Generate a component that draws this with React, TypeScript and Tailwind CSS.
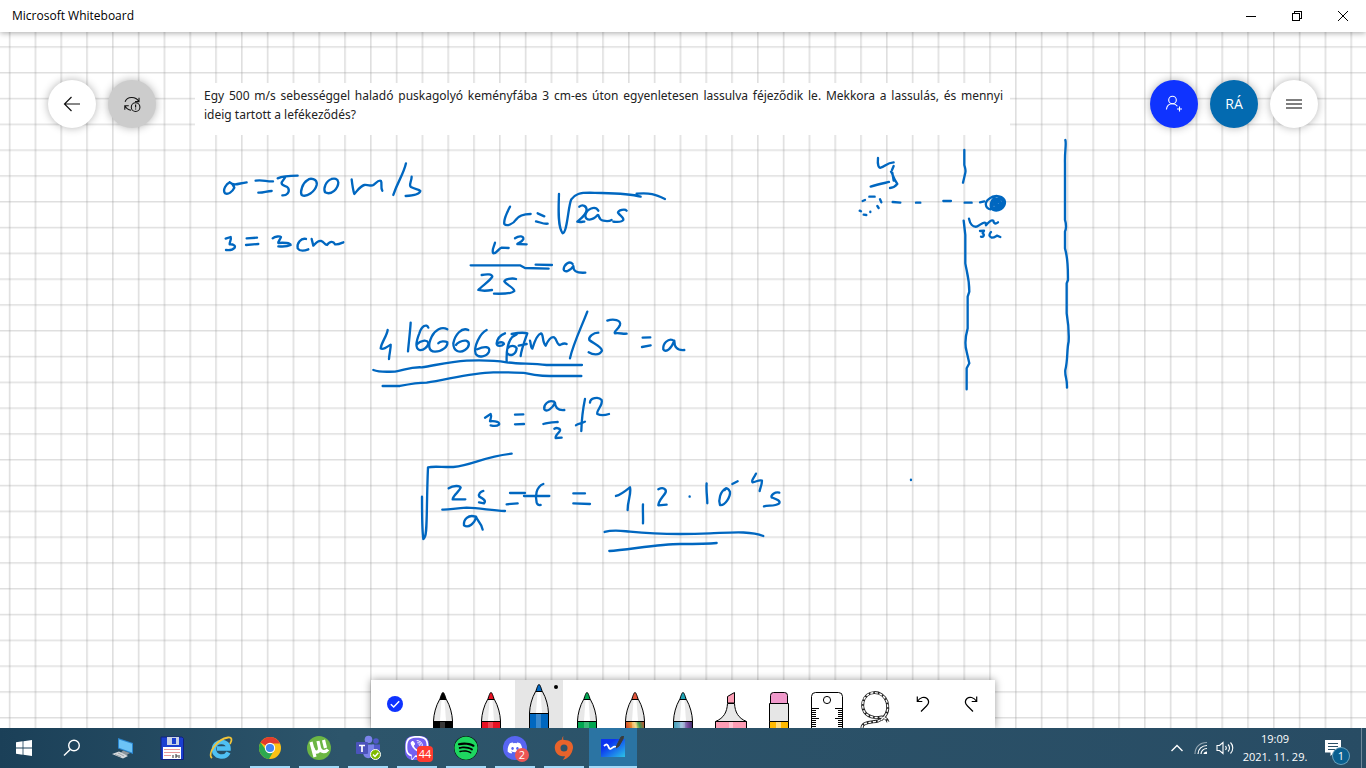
import React, {ReactNode} from 'react'
import {FaDiscord, FaSpotify, FaViber} from 'react-icons/fa'

const INK = '#0067c0'

interface InkGroup {
  id: string
  x: number
  y: number
  strokes: string[]
}

// every group is drawn at three times its size on the board
const inkGroups: InkGroup[] = [
  {
    id: 'given-values',
    x: 195,
    y: 43,
    strokes: [
      'M104 322C94 326 82 345 90 355C100 360 112 350 118 338C116 328 108 324 104 322C120 334 130 325 155 322',
      'M182 317C200 313 215 320 234 319M190 353C205 354 215 348 230 348',
      'M248 310C265 302 285 302 308 302M270 308L260 322C257 335 275 330 280 340C285 352 275 362 262 361',
      'M337 316C322 325 315 350 320 360C335 368 360 350 365 330C368 310 345 308 337 316',
      'M410 312C392 318 385 340 390 352C410 362 430 340 430 322C428 310 418 310 410 312',
      'M470 313C472 330 474 345 478 357C485 350 495 333 508 330C520 328 528 335 535 330C545 322 552 313 558 318C562 325 556 338 562 347',
      'M633 265C625 300 610 315 595 360',
      'M650 305C650 320 640 330 648 336C660 343 672 342 676 348C674 358 650 362 632 363',
      'M92 491L107 486C110 494 103 502 104 508C115 507 122 512 119 518C112 526 100 526 93 525',
      'M155 490L186 488M153 510L190 507',
      'M233 490C240 484 255 483 258 486C256 494 248 500 250 504C265 502 288 504 287 510C275 516 262 515 250 514',
      'M333 492C318 488 305 505 308 520C315 530 330 527 340 523',
      'M350 492L355 512C362 505 368 496 378 498C388 501 388 508 396 510C406 496 416 500 420 508C428 510 438 505 445 502',
    ],
  },
  {
    id: 'acceleration',
    x: 360,
    y: 148,
    strokes: [
      'M450 80C440 100 430 118 433 132C440 140 460 132 467 120C475 108 490 102 512 102',
      'M533 100L553 109M528 124C540 126 550 133 563 131',
      'M597 42C596 80 592 140 608 160C622 158 624 80 634 58C645 42 660 38 690 38C740 40 800 38 842 50M830 41C870 38 885 42 915 57',
      'M658 80C668 72 680 78 680 90C678 106 660 118 652 125C662 128 670 124 673 125',
      'M715 92C706 76 680 86 676 106C676 124 698 122 712 106C718 100 714 120 730 122C740 124 748 124 755 120',
      'M800 92C795 86 775 90 774 98C780 108 792 112 790 120C785 128 770 126 760 125',
      'M405 188C402 200 394 212 400 220C412 220 415 205 425 203L446 204',
      'M465 175C478 166 492 168 490 178C485 188 475 188 472 192L500 193',
      'M332 256H480L495 264L566 266M527 254L576 255',
      'M638 252C628 240 612 255 611 268C612 278 630 275 640 258C640 270 645 280 676 278',
      'M365 285C380 282 398 282 397 290C388 305 365 318 355 330C370 334 385 332 396 330',
      'M468 297C455 293 435 298 433 304C440 316 462 322 463 333C455 342 430 342 402 341',
      'M83 450C80 470 65 485 62 505C68 510 80 502 92 494C93 505 88 520 87 537',
      'M152 428C150 460 146 490 144 514',
      'M205 443C200 430 185 438 178 460C168 485 165 505 178 510C190 513 205 500 205 488C200 478 180 482 172 492',
      'M262 448C245 438 225 450 215 470C203 495 205 515 225 515C245 515 264 500 262 487C255 482 240 484 235 490',
      'M325 450C305 440 285 465 280 490C280 515 300 520 315 510C330 500 330 485 318 482C305 480 290 490 288 495',
      'M380 450C360 460 340 500 347 522C355 535 380 530 387 515C392 500 375 497 352 508',
      'M435 460C422 465 412 475 410 490C410 500 425 500 432 492C430 485 418 485 410 492',
      'M470 463C450 470 438 490 440 545M442 520C450 530 468 525 470 505C465 495 450 495 443 505',
      'M455 462C475 458 495 458 502 460C495 480 485 505 482 528M476 497L500 492',
      'M510 482C513 490 512 505 517 506C525 480 535 462 543 460C552 463 545 485 557 497C565 480 575 470 582 472C592 478 590 495 600 495C610 490 612 488 620 492',
      'M682 395C665 440 640 490 630 535',
      'M715 458C700 458 685 470 688 480C700 490 725 500 726 512C718 528 698 524 686 517',
      'M742 422C760 415 785 420 780 435C775 448 760 456 765 460C780 458 790 463 800 461',
      'M848 473L871 472M846 501L872 496',
      'M938 480C925 475 908 490 910 508C918 520 935 505 943 482C943 500 950 512 973 510',
      'M40 570C60 578 80 575 105 575C130 572 150 560 185 562C230 555 270 545 320 542C370 540 410 542 440 547C480 552 510 550 560 555L666 555',
      'M68 618H120C150 612 170 608 200 608C260 600 330 578 400 577C440 577 480 577 500 580C540 590 560 588 664 588',
    ],
  },
  {
    id: 'time',
    x: 400,
    y: 348,
    strokes: [
      'M255 113L272 102C277 110 270 118 270 124C288 122 301 127 297 134C290 140 280 138 272 136',
      'M345 104L370 103M345 133L372 132',
      'M462 65C445 58 430 75 433 88C440 98 458 85 465 68C465 80 472 92 493 90',
      'M430 132C445 127 455 127 473 126',
      'M463 146C470 142 482 145 480 152C477 160 465 165 467 174L485 173',
      'M555 57C548 90 545 120 544 153M528 136C535 128 545 132 555 125',
      'M570 68C570 55 595 48 605 60C610 75 588 92 592 102C600 106 615 106 627 102',
      'M66 350C66 400 66 450 70 477C84 475 78 400 84 262C100 258 130 262 160 261C220 255 250 230 335 221',
      'M146 325C160 316 180 316 182 323C178 335 160 345 158 358L196 358',
      'M250 333C242 335 234 342 238 350C248 355 260 362 252 370L237 367',
      'M127 389C150 390 165 384 200 383C240 385 270 390 315 393',
      'M226 410C205 402 190 420 192 436C205 446 225 430 228 410C232 424 246 430 248 449',
      'M330 339H375M320 373L353 370',
      'M430 312C408 320 405 350 410 368C413 376 418 376 422 375M372 348H448',
      'M520 340H555M520 370L570 372',
      'M648 348C660 345 680 330 690 322C695 340 683 360 683 390',
      'M729 373C728 390 730 415 729 430',
      'M775 328C790 320 800 328 797 337C790 350 775 362 775 376L800 374',
      'M869 349v1',
      'M920 310C918 330 922 350 922 370',
      'M978 325C960 335 955 360 960 375C975 378 992 350 990 335C985 325 980 322 974 330',
      'M997 312L1013 304',
      'M1068 281C1062 295 1052 302 1058 307C1068 306 1078 298 1086 302C1086 315 1080 325 1079 333',
      'M1138 338C1125 335 1112 345 1115 352C1130 358 1142 362 1138 370C1125 380 1105 375 1092 379',
      'M614 456C640 448 660 452 690 455C760 462 860 463 930 460C990 458 1050 452 1090 468',
      'M628 513C680 510 780 492 840 492C880 492 920 492 950 489',
      'M1533 299v1',
    ],
  },
  {
    id: 'bullet-sketch',
    x: 840,
    y: 98,
    strokes: [
      'M114 84C112 105 116 115 122 113C135 110 140 98 161 97M161 108L156 120',
      'M153 125C160 135 158 142 172 162C165 170 158 174 150 174M157 128L161 152',
      'M92 170C115 162 140 158 147 156',
      'M68 213L75 210M88 200H104M120 208L124 217M112 228L116 234M91 245v1M59 242l4 2M71 254L79 255',
      'M158 216L181 218M228 218H241M310 213H333M374 218H395M420 217L433 214',
      'M452 238C434 235 433 215 448 206C465 192 492 198 495 215C496 235 475 245 460 240C447 232 452 210 465 204M462 210C450 225 460 240 472 238C490 235 494 215 482 206C468 202 460 220 468 230C478 236 486 222 480 214C472 208 466 222 474 226M458 226L488 204M462 234L492 216M470 206L486 232',
      'M373 60V105C376 115 378 122 376 128L369 158',
      'M387 266C390 280 398 292 410 290C422 285 430 274 437 279L438 286C447 275 455 268 460 272C463 285 470 280 474 277',
      'M420 303L432 302L428 310C435 315 430 322 423 320M453 306C447 312 446 320 455 323C465 322 468 318 471 317L481 321',
      'M371 272L376 315V400C380 425 388 445 388 485L383 500V595C376 620 374 645 380 665L388 700L380 715V778',
      'M676 30C680 40 674 60 675 100V270C680 285 678 300 675 305V355C685 390 684 420 684 450L680 460V550C685 580 688 600 686 635C680 660 684 690 676 720C674 740 682 745 681 773',
    ],
  },
]

function Board() {
  return (
    <svg className="absolute inset-0 size-full" aria-hidden="true">
      <defs>
        <pattern id="grid" x="8.8" y="14.2" width="25.8" height="25.8" patternUnits="userSpaceOnUse">
          <path d="M0 0H25.8V1.6H0ZM0 0H1.6V25.8H0Z" fill="#dfdfdf" />
          <path d="M0 0H1.6V1.6H0Z" fill="#c9c9c9" />
        </pattern>
      </defs>
      <rect width="100%" height="100%" fill="url(#grid)" />
      {inkGroups.map(_ => (
        <g
          key={_.id}
          transform={`translate(${_.x} ${_.y}) scale(0.3333)`}
          fill="none"
          stroke={INK}
          strokeWidth="7"
          strokeLinecap="round"
          strokeLinejoin="round"
        >
          {_.strokes.map(d => (
            <path key={d} d={d} />
          ))}
        </g>
      ))}
    </svg>
  )
}

function TitleBar() {
  const button = 'flex h-8 w-[46px] items-center justify-center'
  return (
    <header className="relative z-10 flex h-8 shrink-0 items-center justify-between bg-white pl-3 shadow-[0_1px_6px_rgba(0,0,0,0.35)]">
      <h1 className="text-xs">Microsoft Whiteboard</h1>
      <div className="flex">
        <button className={button} aria-label="Minimize">
          <svg width="10" height="10" shapeRendering="crispEdges">
            <path d="M0 5.5H10" stroke="#000" />
          </svg>
        </button>
        <button className={button} aria-label="Restore">
          <svg width="10" height="10" fill="none" stroke="#000" shapeRendering="crispEdges">
            <path d="M.5 2.5H7.5V9.5H.5ZM2.5 2V.5H9.5V7.5H8" />
          </svg>
        </button>
        <button className={button} aria-label="Close">
          <svg width="10" height="10" stroke="#000">
            <path d="M0 0L10 10M10 0L0 10" />
          </svg>
        </button>
      </div>
    </header>
  )
}

function RoundButton({label, className, children}: {label: string; className: string; children: ReactNode}) {
  return (
    <button
      aria-label={label}
      className={`flex size-12 items-center justify-center rounded-full shadow-[0_0_8px_rgba(0,0,0,0.3)] ${className}`}
    >
      {children}
    </button>
  )
}

function TopControls() {
  return (
    <div className="relative flex justify-between px-12 pt-12">
      <div className="flex gap-3">
        <RoundButton label="Back" className="bg-white">
          <svg width="18" height="16" viewBox="0 0 18 16" fill="none" stroke="#111" strokeWidth="1.2">
            <path d="M17 8H1.5M8.5 1L1.5 8L8.5 15" />
          </svg>
        </RoundButton>
        <RoundButton label="Sync status" className="bg-[#cccccc]">
          <svg width="18" height="18" viewBox="0 0 20 20" fill="none" stroke="#111" strokeWidth="1.2">
            <path d="M2.3 7.5C4.5 1.5 14 1 17.4 7M17.8 3V7.4H13.4M2 16.5V12H6.4M2.3 12.3C3.6 15 6 16.6 9 17" />
            <circle cx="14" cy="13.5" r="4.8" />
            <path d="M14 10.6V14M14 15V16.2" strokeWidth="1.3" />
          </svg>
        </RoundButton>
      </div>
      <div className="flex gap-3">
        <RoundButton label="Invite" className="bg-[#0f33ff]">
          <svg width="18" height="18" viewBox="0 0 18 18" fill="none" stroke="#fff" strokeWidth="1.1">
            <circle cx="7.5" cy="5" r="3.8" />
            <path d="M1.4 14.5C1.8 11 4 8.8 7.5 8.8C9.8 8.8 11.4 9.8 12.4 11.2M14.5 11.5V16.5M12 14H17" />
          </svg>
        </RoundButton>
        <RoundButton label="Account" className="bg-[#036ab0] text-sm text-white">
          RÁ
        </RoundButton>
        <RoundButton label="Menu" className="bg-white">
          <svg width="16" height="10" stroke="#555" strokeWidth="1.3">
            <path d="M0 1H16M0 5H16M0 9H16" />
          </svg>
        </RoundButton>
      </div>
    </div>
  )
}

interface PenProps {
  color: string
  tip?: string
  selected?: boolean
}

function Pen({color, tip = color, selected}: PenProps) {
  return (
    <svg width="48" height="48" viewBox="0 0 48 48">
      <g transform={selected ? 'translate(0 -8)' : undefined} stroke="#000" strokeWidth="1">
        <path d="M20.6 19.5C16.8 26 14.8 34 14.5 41V60H33.5V41C33.2 34 31.2 26 27.4 19.5Z" fill="#e8e8e8" />
        <path d="M22.5 20H25.5L27 41H21Z" fill="#fff" stroke="none" />
        <path d="M14.5 41.5H33.5V60H14.5Z" fill={color} />
        <path d="M21 42H26V60H21Z" fill="#fff" fillOpacity="0.22" stroke="none" />
        <path d="M20.8 19.5C22 15.5 23 12.5 24 12.5S26 15.5 27.2 19.5Z" fill={tip} />
      </g>
      {selected && <circle cx="41" cy="7" r="2" />}
    </svg>
  )
}

function Highlighter() {
  return (
    <svg width="48" height="48" viewBox="0 0 48 48" stroke="#000">
      <path d="M20.5 23V16.5L27.5 12.5V23Z" fill="#fd9db5" />
      <path d="M20.5 23.5H27.5C28 32 31 38 39.5 41.5H8.5C17 38 20 32 20.5 23.5Z" fill="#e8e8e8" />
      <path d="M8.5 41.5H39.5V60H8.5Z" fill="#fd9db5" />
      <path d="M22 42H26V60H22Z" fill="#fff" fillOpacity="0.4" stroke="none" />
    </svg>
  )
}

function Eraser() {
  return (
    <svg width="48" height="48" viewBox="0 0 48 48" stroke="#000">
      <path d="M15.5 23.5V15.5Q15.5 12.5 18.5 12.5H29.5Q32.5 12.5 32.5 15.5V23.5Z" fill="#f099cb" />
      <path d="M14.5 23.5H33.5V41.5H14.5Z" fill="#e6e6e6" />
      <path d="M14.5 41.5H33.5V60H14.5Z" fill="#ffb900" />
      <path d="M21 42H26V60H21Z" fill="#fff" fillOpacity="0.5" stroke="none" />
    </svg>
  )
}

function Ruler() {
  return (
    <svg width="48" height="48" viewBox="0 0 48 48" stroke="#000" fill="#fff">
      <path d="M8.5 60V16.5Q8.5 12.5 12.5 12.5H35.5Q39.5 12.5 39.5 16.5V60" />
      <circle cx="24" cy="20" r="3.6" />
      <path d="M9 28.5H16M9 30.5H13M9 32.5H13M9 34.5H13M9 36.5H13M9 38.5H16M9 40.5H13M9 42.5H13M9 44.5H13M9 46.5H13M39 28.5H32M39 30.5H35M39 32.5H35M39 34.5H35M39 36.5H35M39 38.5H32M39 40.5H35M39 42.5H35M39 44.5H35M39 46.5H35" />
    </svg>
  )
}

function Lasso() {
  const rope =
    'M11 48C11 42 20 42.5 27 41C36 37 38 30 36 22C31 9 15 10 12 22C10 33 18 38 28 37.5C33 36 36 39 37 42M30 40L34 36'
  return (
    <svg width="48" height="48" viewBox="0 0 48 48" fill="none">
      <path d={rope} stroke="#222" strokeWidth="3" />
      <path d={rope} stroke="#fff" strokeWidth="1.4" strokeDasharray="3 1.6" />
    </svg>
  )
}

function ToolButton({label, selected, children}: {label: string; selected?: boolean; children: ReactNode}) {
  return (
    <button
      aria-label={label}
      className={`flex size-12 items-center justify-center overflow-hidden ${selected ? 'bg-[#e6e6e6]' : 'bg-white'}`}
    >
      {children}
    </button>
  )
}

function InkToolbar() {
  return (
    <div
      role="toolbar"
      aria-label="Inking"
      className="relative mt-auto flex self-center bg-white shadow-[0_0_8px_rgba(0,0,0,0.4)]"
    >
      <svg className="absolute size-0">
        <defs>
          <linearGradient id="rainbow" x1="0" y1="0.3" x2="1" y2="0">
            <stop offset="0" stopColor="#c83c2c" />
            <stop offset="0.3" stopColor="#e88a2e" />
            <stop offset="0.5" stopColor="#f3d36a" />
            <stop offset="0.7" stopColor="#3a9b52" />
            <stop offset="1" stopColor="#d8452e" />
          </linearGradient>
          <linearGradient id="galaxy" x1="0" y1="0" x2="1" y2="0">
            <stop offset="0" stopColor="#3f9fb5" />
            <stop offset="0.45" stopColor="#8fb6d8" />
            <stop offset="0.75" stopColor="#7a4b9c" />
            <stop offset="1" stopColor="#3a2c6b" />
          </linearGradient>
        </defs>
      </svg>
      <ToolButton label="Done inking">
        <svg width="16" height="16" viewBox="0 0 16 16" fill="none">
          <circle cx="8" cy="8" r="8" fill="#0f33ff" />
          <path d="M3.8 8.2L6.7 11L12.2 5.2" stroke="#fff" strokeWidth="1.5" />
        </svg>
      </ToolButton>
      <ToolButton label="Black pen">
        <Pen color="#000000" />
      </ToolButton>
      <ToolButton label="Red pen">
        <Pen color="#e81123" />
      </ToolButton>
      <ToolButton label="Blue pen" selected>
        <Pen color="#0067c0" selected />
      </ToolButton>
      <ToolButton label="Green pen">
        <Pen color="#00a651" />
      </ToolButton>
      <ToolButton label="Rainbow pen">
        <Pen color="url(#rainbow)" tip="#e0543a" />
      </ToolButton>
      <ToolButton label="Galaxy pen">
        <Pen color="url(#galaxy)" tip="#1fa3b5" />
      </ToolButton>
      <ToolButton label="Highlighter">
        <Highlighter />
      </ToolButton>
      <ToolButton label="Eraser">
        <Eraser />
      </ToolButton>
      <ToolButton label="Ruler">
        <Ruler />
      </ToolButton>
      <ToolButton label="Lasso select">
        <Lasso />
      </ToolButton>
      <ToolButton label="Undo">
        <svg width="14" height="16" viewBox="0 0 14 16" fill="none" stroke="#000" strokeWidth="1.2">
          <path d="M1.3 .5V5.5H6.3M1.5 5.3C4 1.2 8.5 .3 11 2.5C13.5 5 12.5 8 10.5 10L5 15.5" />
        </svg>
      </ToolButton>
      <ToolButton label="Redo">
        <svg width="14" height="16" viewBox="0 0 14 16" fill="none" stroke="#000" strokeWidth="1.2">
          <path d="M12.7 .5V5.5H7.7M12.5 5.3C10 1.2 5.5 .3 3 2.5C.5 5 1.5 8 3.5 10L9 15.5" />
        </svg>
      </ToolButton>
    </div>
  )
}

function WindowsLogo() {
  return (
    <svg width="16" height="16" viewBox="0 0 16 16" fill="#fff">
      <path d="M0 2.2L6.6 1.3V7.6H0ZM7.4 1.2L16 0V7.6H7.4ZM0 8.4H6.6V14.7L0 13.8ZM7.4 8.4H16V16L7.4 14.8Z" />
    </svg>
  )
}

function SearchIcon() {
  return (
    <svg width="18" height="18" viewBox="0 0 18 18" fill="none" stroke="#fff" strokeWidth="1.4">
      <circle cx="11" cy="6.5" r="5.3" />
      <path d="M7.2 10.4L1 16.6" />
    </svg>
  )
}

function ComputerIcon() {
  return (
    <svg width="24" height="24" viewBox="0 0 24 24">
      <path d="M7 2L22 7V18L7 12.5Z" fill="#2c86cf" />
      <path d="M8 3.4L21 7.8V16.5L8 11.8Z" fill="#6cc3f7" />
      <path d="M12 14.5L19 17L14 20L9 17.5Z" fill="#8b959c" />
      <path d="M1 18L8 15.5L17 20L12 22.5Z" fill="#d5d9dc" />
      <path d="M4 18.5L10 20.8M7 17L13 20" stroke="#8b959c" strokeWidth="0.8" />
    </svg>
  )
}

function FloppyIcon() {
  return (
    <svg width="24" height="24" viewBox="0 0 24 24">
      <path d="M1 1H22L23.5 2.5V23.5H1Z" fill="#1b3fd0" stroke="#11227c" />
      <rect x="7" y="1" width="12" height="8" fill="#c9d2e4" />
      <rect x="12" y="2" width="4" height="6" fill="#1b3fd0" />
      <rect x="3" y="11" width="18" height="12" fill="#fff" />
      <path d="M4 13.5H20M4 16.5H20M4 19.5H11" stroke="#e79a9a" />
      <path d="M13 19V22M15 19H17V21H15M19 19V22" stroke="#333" fill="none" />
    </svg>
  )
}

function ExplorerIcon() {
  return (
    <svg width="24" height="24" viewBox="0 0 24 24" fill="none">
      <path d="M19.5 16.5C16 23 5 21.500 5 13C5 4 19.500 3.500 19.500 12.500H8" stroke="#4fc0f3" strokeWidth="4.5" />
      <path d="M3 22C-2 18 8 3 19 1.5C23 1 23.5 4 21 8" stroke="#f2c53a" strokeWidth="1.8" />
    </svg>
  )
}

function ChromeIcon() {
  return (
    <svg width="24" height="24" viewBox="0 0 24 24">
      <circle cx="12" cy="12" r="11" fill="#fbc116" />
      <path d="M12 12L2.5 6.5A11 11 0 0 1 21.5 6.5L21.9 7.5H12Z" fill="#e33b2e" />
      <path d="M2.5 6.5A11 11 0 0 0 11 23L16 14.5L8 14Z" fill="#2da94f" />
      <circle cx="12" cy="12" r="5.2" fill="#fff" />
      <circle cx="12" cy="12" r="4.1" fill="#4285f4" />
    </svg>
  )
}

function TorrentIcon() {
  return (
    <svg width="24" height="24" viewBox="0 0 24 24" fill="none">
      <circle cx="12" cy="12" r="12" fill="#6cb644" />
      <path
        d="M4 6L8 21M6 12C7 18 13 17 12.5 12L11 5M12.5 12C14 17 19 16 21 13.5M18.5 12L16.5 4"
        stroke="#fff"
        strokeWidth="3.2"
      />
    </svg>
  )
}

function TeamsIcon() {
  return (
    <svg width="26" height="26" viewBox="0 0 26 26">
      <circle cx="21" cy="6" r="2.8" fill="#5059c9" />
      <circle cx="13.5" cy="4.5" r="3.8" fill="#7b83eb" />
      <path d="M17 9.5H25V17Q24 20 20 20H17Z" fill="#5059c9" />
      <path d="M8 9.5H19V18Q17 24 12 23Q8 22 8 17Z" fill="#7b83eb" />
      <rect x="1" y="7" width="12" height="12" rx="1" fill="#4b53bc" />
      <path d="M4 10.5H10M7 10.5V17" stroke="#fff" strokeWidth="1.7" />
      <circle cx="20.5" cy="19.5" r="5" fill="#7fba00" stroke="#fff" />
      <path d="M18 19.5L20 21.5L23.3 17.8" fill="none" stroke="#fff" strokeWidth="1.4" />
    </svg>
  )
}

function OriginIcon() {
  return (
    <svg width="20" height="24" viewBox="0 0 20 24" fill="#e8632b">
      <path
        fillRule="evenodd"
        d="M9.5 0C8 1.5 8 2.5 8.3 3.6C3 4.5 0 8.5 1 13.5C2 18.5 6 20.5 11 20.3C10.5 22 9.5 23 8.8 24C14 22.5 18 18.5 19 12C19.5 6.5 15 3.5 9.5 4C9 2.5 9 1.5 9.5 0ZM10 8.500A3.500 3.500 0 1 0 10 15.500A3.500 3.500 0 1 0 10 8.500Z"
      />
    </svg>
  )
}

function WhiteboardIcon() {
  return (
    <svg width="26" height="24" viewBox="0 0 26 24" fill="none">
      <defs>
        <linearGradient id="board" x1="0" y1="0" x2="1" y2="1">
          <stop offset="0.3" stopColor="#0a35f0" />
          <stop offset="1" stopColor="#2cc3e6" />
        </linearGradient>
      </defs>
      <rect x="1" y="3" width="24" height="18" fill="url(#board)" />
      <path d="M4 10C7 7 8 9 9 12C11 15 13 9 16 11" stroke="#fff" strokeWidth="1.8" />
      <path d="M16 12L17 9L21 1L23.5 0L23 3L19 10Z" fill="#3b3b3b" stroke="#3b3b3b" />
    </svg>
  )
}

interface TaskProps {
  label: string
  running?: boolean
  active?: boolean
  children: ReactNode
}

function Task({label, running, active, children}: TaskProps) {
  return (
    <button
      aria-label={label}
      className={`relative flex h-10 w-12 items-center justify-center ${active ? 'bg-[#2b74a3]' : ''}`}
    >
      {children}
      {running && <span className={`absolute bottom-0 h-0.5 bg-[#a3daf9] ${active ? 'w-12' : 'w-10'}`} />}
    </button>
  )
}

function Tray() {
  return (
    <div className="flex h-full items-center text-white">
      <button aria-label="Show hidden icons" className="flex w-6 justify-center">
        <svg width="12" height="8" fill="none" stroke="#fff" strokeWidth="1.4">
          <path d="M.5 7L6 1.5L11.5 7" />
        </svg>
      </button>
      <button aria-label="Network" className="flex w-6 justify-center">
        <svg width="14" height="14" viewBox="0 0 14 14" fill="none" stroke="#fff" strokeWidth="1.2">
          <path d="M1 13C1 6 6 1.5 13 1.5" strokeOpacity="0.5" />
          <path d="M4 13C4 8 8 4.5 13 4.5M7 13C7 10 9.5 7.5 13 7.5" />
          <path d="M9.5 13C9.5 11.5 11 10.5 13 10.5V13Z" fill="#fff" stroke="none" />
        </svg>
      </button>
      <button aria-label="Volume" className="flex w-6 justify-center">
        <svg width="18" height="14" viewBox="0 0 18 14" fill="none" stroke="#fff" strokeWidth="1.1">
          <path d="M1 4.5H3.5L7 1.5V12.5L3.5 9.5H1ZM9.5 5C10.5 6.2 10.5 7.8 9.5 9M12 3.5C14 5.5 14 8.5 12 10.5M14.5 1.5C17.5 4.5 17.5 9.5 14.5 12.5" />
        </svg>
      </button>
      <time dateTime="2021-11-29T19:09" className="w-[76px] text-center text-[11px] leading-[18px]">
        19:09
        <br />
        2021. 11. 29.
      </time>
      <button aria-label="1 new notification" className="relative mr-2 flex size-10 items-center justify-center">
        <svg width="16" height="16" viewBox="0 0 16 16">
          <path d="M0 0H16V12.5H9L5.5 16V12.5H0Z" fill="#fff" />
          <path d="M3 3.5H13M3 6.5H13M3 9.5H10" stroke="#2a4f66" />
        </svg>
        <span className="absolute right-1 bottom-1 flex size-4 items-center justify-center rounded-full bg-[#0b5f8f] text-[11px] ring-1 ring-[#6ba2bd]">
          1
        </span>
      </button>
      <span className="mr-1 h-full w-px bg-[#70889a]" />
    </div>
  )
}

function Taskbar() {
  return (
    <footer className="relative z-10 flex h-10 shrink-0 items-center justify-between bg-linear-to-r from-[#1b4058] via-[#2d556b] via-25% to-[#284c64]">
      <nav aria-label="Taskbar" className="flex gap-[3px]">
        <div className="flex">
          <Task label="Start">
            <WindowsLogo />
          </Task>
          <Task label="Search">
            <SearchIcon />
          </Task>
        </div>
        <div className="flex gap-px">
          <Task label="This PC">
            <ComputerIcon />
          </Task>
          <Task label="Total Commander">
            <FloppyIcon />
          </Task>
          <Task label="Internet Explorer">
            <ExplorerIcon />
          </Task>
          <Task label="Chrome" running>
            <ChromeIcon />
          </Task>
          <Task label="µTorrent" running>
            <TorrentIcon />
          </Task>
          <Task label="Teams" running>
            <TeamsIcon />
          </Task>
          <Task label="Viber" running>
            <FaViber size={24} color="#fff" className="rounded-lg bg-[#7360f2]" />
            <span className="absolute right-2 bottom-1.5 flex size-4 items-center justify-center rounded bg-[#ff3b30] text-[11px] text-white">
              44
            </span>
          </Task>
          <Task label="Spotify" running>
            <FaSpotify size={24} color="#1ed760" className="rounded-full bg-black" />
          </Task>
          <Task label="Discord" running>
            <span className="flex size-6 items-center justify-center rounded-full bg-[#5865f2]">
              <FaDiscord size={16} color="#fff" />
            </span>
            <span className="absolute right-2.5 bottom-1.5 flex size-3.5 items-center justify-center rounded-full bg-[#ed5555] text-[11px] text-white">
              2
            </span>
          </Task>
          <Task label="Origin" running>
            <OriginIcon />
          </Task>
          <Task label="Whiteboard" running active>
            <WhiteboardIcon />
          </Task>
        </div>
      </nav>
      <Tray />
    </footer>
  )
}

export default function App() {
  return (
    <div className="flex h-screen flex-col overflow-hidden bg-white font-['Open_Sans','Noto_Sans',sans-serif] text-black">
      <TitleBar />
      <main className="relative flex flex-1 flex-col">
        <Board />
        {/* problem text pasted onto the canvas */}
        <p className="absolute top-[51px] left-[195px] h-[52px] w-[815px] bg-white pt-[3px] pr-[7px] pl-[9px] text-justify font-['Noto_Sans',sans-serif] text-xs leading-[19px] text-[#222]">
          Egy 500 m/s sebességgel haladó puskagolyó keményfába 3 cm-es úton egyenletesen lassulva féjeződik le. Mekkora a
          lassulás, és mennyi ideig tartott a lefékeződés?
        </p>
        <TopControls />
        <InkToolbar />
      </main>
      <Taskbar />
    </div>
  )
}
